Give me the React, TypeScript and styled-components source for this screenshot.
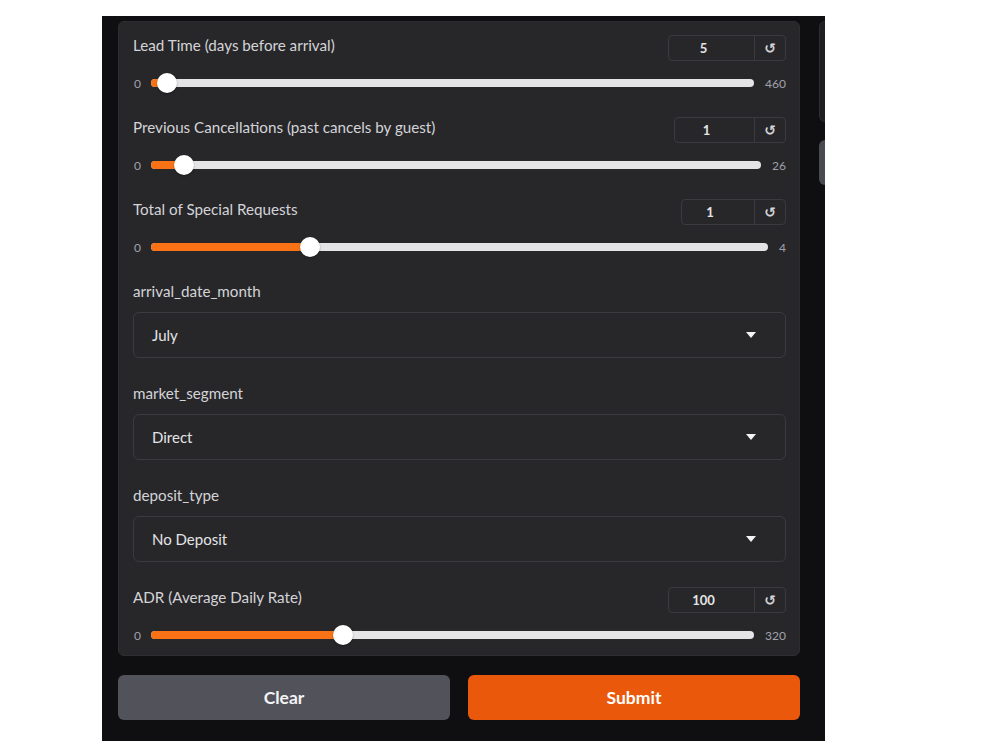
import React from 'react'
import styled, { createGlobalStyle } from 'styled-components'

const GlobalStyle = createGlobalStyle`
  html, body {
    margin: 0;
    padding: 0;
    background: #ffffff;
  }
  * { box-sizing: border-box; }
`

type SliderField = {
  kind: 'slider'
  label: string
  value: number
  max: number
  boxWidth: number
}

type DropField = {
  kind: 'drop'
  label: string
  value: string
}

const fields: (SliderField | DropField)[] = [
  { kind: 'slider', label: 'Lead Time (days before arrival)', value: 5, max: 460, boxWidth: 87 },
  { kind: 'slider', label: 'Previous Cancellations (past cancels by guest)', value: 1, max: 26, boxWidth: 81 },
  { kind: 'slider', label: 'Total of Special Requests', value: 1, max: 4, boxWidth: 74 },
  { kind: 'drop', label: 'arrival_date_month', value: 'July' },
  { kind: 'drop', label: 'market_segment', value: 'Direct' },
  { kind: 'drop', label: 'deposit_type', value: 'No Deposit' },
  { kind: 'slider', label: 'ADR (Average Daily Rate)', value: 100, max: 320, boxWidth: 87 },
]

const Slider = ({ f }: { f: SliderField }) => {
  const frac = f.value / f.max
  const pos = `calc(10px + ${frac} * (100% - 20px))`
  return (
    <Block>
      <Header>
        <Label>{f.label}</Label>
        <NumberBox>
          <NumValue w={f.boxWidth}>{f.value}</NumValue>
          <Reset>↺</Reset>
        </NumberBox>
      </Header>
      <RangeRow>
        <Tick>0</Tick>
        <Track>
          <Fill style={{ width: pos }} />
          <Thumb style={{ left: pos }} />
        </Track>
        <Tick>{f.max}</Tick>
      </RangeRow>
    </Block>
  )
}

const Dropdown = ({ f }: { f: DropField }) => (
  <Block spaced>
    <Label>{f.label}</Label>
    <Select>
      <span>{f.value}</span>
      <svg width="10" height="6" viewBox="0 0 10 6">
        <path d="M0 0 L10 0 L5 6 Z" fill="#f4f4f5" />
      </svg>
    </Select>
  </Block>
)

export default function App() {
  return (
    <>
      <GlobalStyle />
      <Frame>
        <Column>
          <Panel>
            {fields.map((f) =>
              f.kind === 'slider' ? <Slider key={f.label} f={f} /> : <Dropdown key={f.label} f={f} />
            )}
          </Panel>
          <Buttons>
            <Button variant="secondary">Clear</Button>
            <Button variant="primary">Submit</Button>
          </Buttons>
        </Column>
        <Side>
          <SideBox />
          <SideThumb />
        </Side>
      </Frame>
    </>
  )
}

const Frame = styled.div`
  margin: 16px 0 0 102px;
  width: 723px;
  height: 725px;
  background: #0f0f11;
  overflow: hidden;
  display: flex;
  gap: 19px;
  padding: 5px 0 0 16px;
  font-family: Lato, "Liberation Sans", sans-serif;
`

const Column = styled.div`
  width: 682px;
  flex-shrink: 0;
  display: flex;
  flex-direction: column;
  gap: 19px;
`

const Panel = styled.div`
  background: #27272a;
  border: 1px solid #2e2e32;
  border-radius: 6px;
  padding: 13px 13px 10px 14px;
  display: flex;
  flex-direction: column;
  gap: 24px;
`

const Block = styled.div<{ spaced?: boolean }>`
  display: flex;
  flex-direction: column;
  gap: 11px;
  margin-bottom: ${({ spaced }) => (spaced ? 1 : 0)}px;
`

const Header = styled.div`
  display: flex;
  justify-content: space-between;
  align-items: flex-start;
  margin-bottom: 1px;
`

const Label = styled.div`
  font-size: 15.2px;
  line-height: 20px;
  color: #d4d4d8;
`

const NumberBox = styled.div`
  display: flex;
  height: 26px;
  border: 1px solid #3a3a40;
  border-radius: 4px;
`

const NumValue = styled.div<{ w: number }>`
  width: ${({ w }) => w - 1}px;
  padding-right: 16px;
  text-align: center;
  line-height: 24px;
  font-size: 13px;
  font-weight: 700;
  color: #e4e4e7;
  border-right: 1px solid #3a3a40;
`

const Reset = styled.div`
  width: 30px;
  text-align: center;
  line-height: 24px;
  font-size: 14px;
  font-weight: 700;
  color: #d4d4d8;
  font-family: "DejaVu Sans", sans-serif;
`

const RangeRow = styled.div`
  display: flex;
  align-items: center;
  height: 20px;
  gap: 10px;
`

const Tick = styled.div`
  font-size: 12px;
  color: #a1a1aa;
  padding-left: 1px;
`

const Track = styled.div`
  position: relative;
  flex: 1;
  height: 8px;
  border-radius: 4px;
  background: #e4e4e7;
`

const Fill = styled.div`
  height: 100%;
  border-radius: 4px;
  background: #f97316;
`

const Thumb = styled.div`
  position: absolute;
  top: 50%;
  width: 20px;
  height: 20px;
  margin: -10px 0 0 -10px;
  border-radius: 50%;
  background: #ffffff;
  box-shadow: 0 1px 2px rgba(0, 0, 0, 0.35);
`

const Select = styled.div`
  height: 46px;
  border: 1px solid #3a3a40;
  border-radius: 6px;
  display: flex;
  align-items: center;
  justify-content: space-between;
  padding: 0 29px 0 18px;
  font-size: 15px;
  color: #e4e4e7;
`

const Buttons = styled.div`
  display: grid;
  grid-template-columns: 1fr 1fr;
  gap: 18px;
`

const Button = styled.button<{ variant: 'primary' | 'secondary' }>`
  height: 45px;
  border: none;
  border-radius: 6px;
  font-family: Lato, "Liberation Sans", sans-serif;
  font-size: 17.5px;
  font-weight: 700;
  color: ${({ variant }) => (variant === 'primary' ? '#ffffff' : '#f4f4f5')};
  background: ${({ variant }) => (variant === 'primary' ? '#ea580c' : '#52525b')};
`

const Side = styled.div`
  width: 40px;
  flex-shrink: 0;
  display: flex;
  flex-direction: column;
  gap: 18px;
`

const SideBox = styled.div`
  height: 101px;
  background: #1f1f22;
  border: 1px solid #2e2e32;
  border-radius: 6px;
`

const SideThumb = styled.div`
  height: 45px;
  background: #4a4a52;
  border-radius: 6px;
`
